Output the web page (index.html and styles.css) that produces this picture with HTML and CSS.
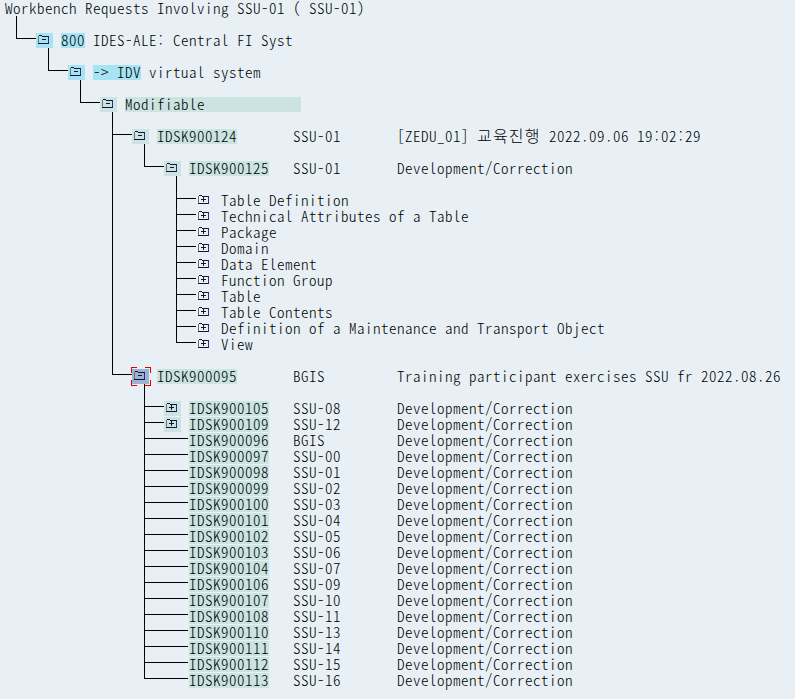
FILE: index.html
```
<!DOCTYPE html>
<html lang="ko">
<head>
<meta charset="utf-8">
<title>Workbench Requests</title>
<link rel="stylesheet" href="styles.css">
</head>
<body>
<svg width="0" height="0" class="defs">
  <symbol id="folder" viewBox="0 0 11 9" shape-rendering="crispEdges">
    <path fill="#15153c" d="M1 0h3v1h-3zM4 1h7v1h-7zM0 8h11v1h-11z"/>
    <path fill="#8a6a58" d="M0 1h1v7h-1z"/>
    <path fill="#3a2a78" d="M10 2h1v6h-1z"/>
  </symbol>
  <symbol id="minus" viewBox="0 0 11 9" shape-rendering="crispEdges">
    <use href="#folder"/><path fill="#15153c" d="M4 4h4v1h-4z"/>
  </symbol>
  <symbol id="plus" viewBox="0 0 11 9" shape-rendering="crispEdges">
    <use href="#folder"/><path fill="#15153c" d="M3 4h5v1h-5zM5 2h1v5h-1z"/>
  </symbol>
</svg>
<main class="tree" id="tree"></main>
<script src="tree.js"></script>
</body>
</html>
```
FILE: styles.css
```
* { box-sizing: border-box; }
body {
  margin: 0;
  height: 699px;
  overflow: hidden;
  background: #e8f0f6;
  color: #000;
  font-family: "Noto Sans CJK KR", "Liberation Mono", monospace;
  font-size: 15px;
  font-weight: 300;
  font-feature-settings: "hwid";
  letter-spacing: 0.5px;
}
.defs { position: absolute; }
.row { display: flex; height: 16px; line-height: 13px; padding-top: 1px; white-space: pre; }
.title { padding-left: 5px; }
ul { list-style: none; margin: 0; padding: 0 0 0 16px; }
ul ul { padding-left: 32px; }
li { position: relative; --elbow: 6px; }
li.gap { padding-top: 16px; --elbow: 22px; }
li::before {
  content: "";
  position: absolute;
  left: 0;
  top: 0;
  bottom: 0;
  width: 1px;
  background: #000;
}
li:last-child::before { bottom: auto; height: calc(var(--elbow) + 1px); }
li::after {
  content: "";
  position: absolute;
  left: 0;
  top: var(--elbow);
  width: 20px;
  height: 1px;
  background: #000;
}
li.leaf::after { width: 44px; }
.toggle { flex: none; width: 17px; height: 15px; margin: 0 8px 0 20px; padding: 2px 0 0 2px; }
.toggle svg { display: block; width: 11px; height: 9px; }
.leaf > .row { padding-left: 45px; }
.name { flex: none; height: 15px; }
.code { width: 80px; margin-right: 56px; }
li li li li li .code { margin-right: 24px; }
.user { flex: none; width: 104px; }
.cyan { background: #a6e4f3; }
.teal { background: #cbe3e1; }
.status { width: 176px; }
.selected { position: relative; background: #9bb3d3; }
.toggle .corners { position: absolute; left: -1px; top: -2px; width: 20px; height: 19px; }
.ko { display: inline-block; width: 64px; font-size: 16px; letter-spacing: 1.2px; }
```
FILE: tree.js
```
const corners = '<svg class="corners" viewBox="0 0 20 19" shape-rendering="crispEdges"><path fill="#e00000" d="M0 0h6v1h-5v5h-1zM14 0h6v6h-1v-5h-5zM0 13h1v5h5v1h-6zM19 13h1v6h-6v-1h5z"/></svg>';

const toggle = (icon, tone, selected) => icon
  ? `<span class="toggle ${selected ? 'selected' : tone}"><svg><use href="#${icon}"/></svg>${selected ? corners : ''}</span>` : '';

const node = ({ icon, tone = '', selected, gap, body, kids = '' }) =>
  `<li class="${gap ? 'gap' : ''} ${icon ? '' : 'leaf'}"><div class="row">${toggle(icon, tone, selected)}${body}</div>${kids && `<ul>${kids}</ul>`}</li>`;

const request = (id, user, text) =>
  `<span class="name code teal">IDSK${id}</span><span class="user">${user}</span><span>${text}</span>`;

const objects = ['Table Definition', 'Technical Attributes of a Table', 'Package', 'Domain', 'Data Element',
  'Function Group', 'Table', 'Table Contents', 'Definition of a Maintenance and Transport Object', 'View']
  .map((t, i) => node({ icon: 'plus', gap: !i, body: `<span>${t}</span>` })).join('');

const tasks = [['900105', 'SSU-08'], ['900109', 'SSU-12'], ['900096', 'BGIS'], ['900097', 'SSU-00'],
  ['900098', 'SSU-01'], ['900099', 'SSU-02'], ['900100', 'SSU-03'], ['900101', 'SSU-04'], ['900102', 'SSU-05'],
  ['900103', 'SSU-06'], ['900104', 'SSU-07'], ['900106', 'SSU-09'], ['900107', 'SSU-10'], ['900108', 'SSU-11'],
  ['900110', 'SSU-13'], ['900111', 'SSU-14'], ['900112', 'SSU-15'], ['900113', 'SSU-16']]
  .map(([id, user], i) => node({ icon: i < 2 ? 'plus' : '', tone: 'teal', gap: !i,
    body: request(id, user, 'Development/Correction') })).join('');

const task125 = node({ icon: 'minus', tone: 'teal', gap: true,
  body: request('900125', 'SSU-01', 'Development/Correction'), kids: objects });

const requests =
  node({ icon: 'minus', tone: 'teal', gap: true, kids: task125,
    body: request('900124', 'SSU-01', '[ZEDU_01] <span class="ko">교육진행</span> 2022.09.06 19:02:29') }) +
  node({ icon: 'minus', selected: true, gap: true, kids: tasks,
    body: request('900095', 'BGIS', 'Training participant exercises SSU fr 2022.08.26') });

const status = node({ icon: 'minus', tone: 'teal', gap: true, kids: requests,
  body: '<span class="name status teal">Modifiable</span>' });

const target = node({ icon: 'minus', tone: 'cyan', gap: true, kids: status,
  body: '<span class="name cyan">-&gt; IDV</span><span> virtual system</span>' });

const client = node({ icon: 'minus', tone: 'cyan', gap: true, kids: target,
  body: '<span class="name cyan">800</span><span> IDES-ALE: Central FI Syst</span>' });

document.getElementById('tree').innerHTML =
  `<div class="row title">Workbench Requests Involving SSU-01 ( SSU-01)</div><ul>${client}</ul>`;
```
